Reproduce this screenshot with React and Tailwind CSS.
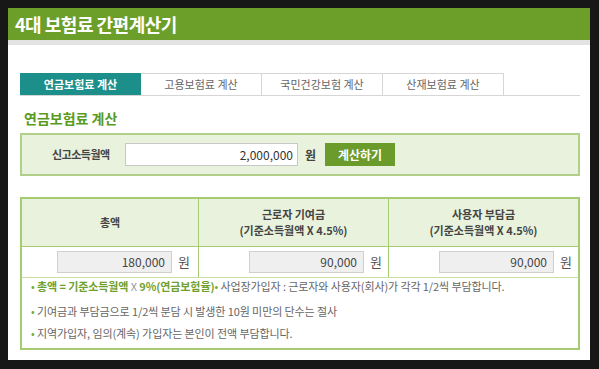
import React from 'react';

const tabs = ['연금보험료 계산', '고용보험료 계산', '국민건강보험 계산', '산재보험료 계산'];

function Field({ value }) {
    return (
        <div className="flex items-center justify-end gap-[6px]">
            <div className="w-[115px] h-[22px] border border-[#cfcfcf] bg-[#efefef] text-right pr-[6px] text-[12px] leading-[20px] text-[#444]">{value}</div>
            <span className="text-[13px] text-[#555] w-[14px]">원</span>
        </div>
    );
}

export default function App() {
    return (
        <div className="w-[599px] h-[369px] bg-[#171717] p-[8px] pr-[9px] pb-[9px]" style={{ fontFamily: '"Noto Sans CJK KR", "Noto Sans", sans-serif' }}>
            <div className="bg-white h-full flex flex-col">
                <div className="h-[32px] bg-[#6c9f2a] flex items-center pl-[7px]">
                    <h1 className="text-[18px] font-bold text-white tracking-[-0.5px]">4대 보험료 간편계산기</h1>
                </div>
                <div className="h-[5px] bg-[#e3e3e3]" />

                <div className="px-[12px] pt-[28px]">
                    <div className="flex border-b border-[#d6d6d6] w-[560px]">
                        {tabs.map((t, i) => (
                            <div
                                key={t}
                                className={`w-[121px] h-[22px] flex items-center justify-center text-[11px] ${i === 0 ? 'bg-[#1d8f8a] text-white font-bold' : 'bg-white text-[#666] border-t border-r border-[#d6d6d6]'}`}
                            >
                                {t}
                            </div>
                        ))}
                    </div>

                    <h2 className="mt-[12px] ml-[4px] text-[14px] font-bold text-[#5a9a1e] leading-[20px]">연금보험료 계산</h2>

                    <div className="mt-[5px] w-[560px] h-[43px] bg-[#e9f2dc] border-2 border-[#b1d08a] flex items-center">
                        <span className="ml-[30px] w-[63px] text-[11px] font-bold text-[#444] tracking-[-0.5px] whitespace-nowrap">신고소득월액</span>
                        <div className="ml-[10px] w-[173px] h-[23px] bg-white border border-[#c8c8c8] text-right pr-[4px] text-[12px] leading-[21px] text-[#333]">2,000,000</div>
                        <span className="ml-[7px] text-[12px] font-bold text-[#444]">원</span>
                        <button className="ml-[9px] w-[70px] h-[23px] bg-[#6b9b2b] text-white text-[12px] font-bold">계산하기</button>
                    </div>

                    <div className="mt-[21px] w-[560px] border-2 border-[#a6cb72]">
                        <div className="grid grid-cols-[177px_190px_1fr] bg-[#e9f2dc] h-[48px] border-b border-[#a6cb72]">
                            <div className="flex items-center justify-center text-[11px] font-bold text-[#444] border-r border-[#a6cb72]">총액</div>
                            <div className="flex flex-col items-center justify-center gap-[1px] text-[11px] font-bold text-[#444] leading-[15px] border-r border-[#a6cb72]">
                                <span>근로자 기여금</span>
                                <span>(기준소득월액 X 4.5%)</span>
                            </div>
                            <div className="flex flex-col items-center justify-center gap-[1px] text-[11px] font-bold text-[#444] leading-[15px]">
                                <span>사용자 부담금</span>
                                <span>(기준소득월액 X 4.5%)</span>
                            </div>
                        </div>
                        <div className="grid grid-cols-[177px_190px_1fr] h-[31px] border-b border-[#c8dfa6]">
                            <div className="flex items-center justify-end pr-[6px] border-r border-[#a6cb72]"><Field value="180,000" /></div>
                            <div className="flex items-center justify-end pr-[4px] border-r border-[#a6cb72]"><Field value="90,000" /></div>
                            <div className="flex items-center justify-end pr-[4px]"><Field value="90,000" /></div>
                        </div>
                        <div className="px-[9px] pb-[4px] text-[11px] text-[#666] tracking-[-0.1px]">
                            <p className="leading-[17px]">
                                <span className="text-[#7aac3a]">•</span>{' '}
                                <span className="text-[#6fa12f] font-bold">총액 = 기준소득월액 <span className="font-normal text-[#999]">X</span> 9%(연금보험율)</span>
                                <span className="text-[#7aac3a]">•</span> 사업장가입자 : 근로자와 사용자(회사)가 각각 1/2씩 부담합니다.
                            </p>
                            <p className="mt-[5px] leading-[22px]"><span className="text-[#7aac3a]">•</span> 기여금과 부담금으로 1/2씩 분담 시 발생한 10원 미만의 단수는 절사</p>
                            <p className="leading-[22px]"><span className="text-[#7aac3a]">•</span> 지역가입자, 임의(계속) 가입자는 본인이 전액 부담합니다.</p>
                        </div>
                    </div>
                </div>
            </div>
        </div>
    );
}
